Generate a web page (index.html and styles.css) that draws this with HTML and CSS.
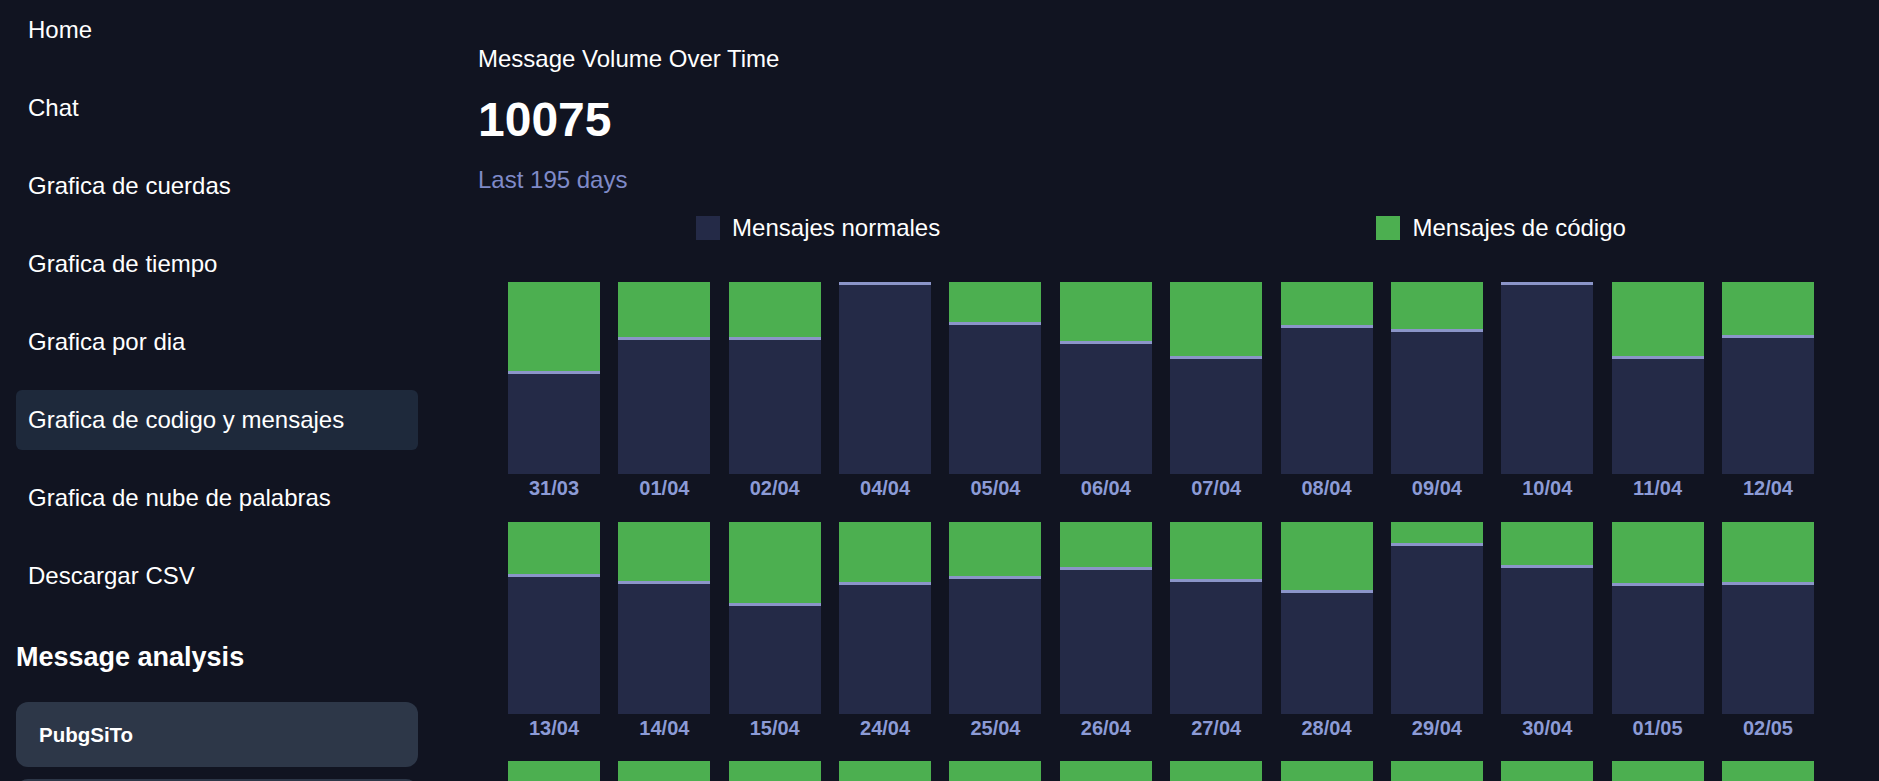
FILE: index.html
```html
<!DOCTYPE html>
<html lang="es">
<head>
<meta charset="utf-8">
<title>Message Volume Over Time</title>
<link rel="stylesheet" href="styles.css">
</head>
<body>
<div class="app">
  <aside class="sidebar">
    <nav class="nav">
      <a class="nav-item">Home</a>
      <a class="nav-item">Chat</a>
      <a class="nav-item">Grafica de cuerdas</a>
      <a class="nav-item">Grafica de tiempo</a>
      <a class="nav-item">Grafica por dia</a>
      <a class="nav-item active">Grafica de codigo y mensajes</a>
      <a class="nav-item">Grafica de nube de palabras</a>
      <a class="nav-item">Descargar CSV</a>
    </nav>
    <h2 class="section-title">Message analysis</h2>
    <div class="cards">
      <div class="user-card">PubgSiTo</div>
      <div class="user-card"></div>
    </div>
  </aside>
  <main class="main">
    <div class="chart-title">Message Volume Over Time</div>
    <div class="chart-total">10075</div>
    <div class="chart-sub">Last 195 days</div>
    <div class="legend">
      <div class="legend-item"><span class="swatch swatch-normal"></span>Mensajes normales</div>
      <div class="legend-item"><span class="swatch swatch-code"></span>Mensajes de código</div>
    </div>
    <div class="chart">
      <div class="col"><div class="bar"><div class="code" style="height:46.35%"></div><div class="normal"></div></div><div class="label">31/03</div></div>
      <div class="col"><div class="bar"><div class="code" style="height:28.65%"></div><div class="normal"></div></div><div class="label">01/04</div></div>
      <div class="col"><div class="bar"><div class="code" style="height:28.65%"></div><div class="normal"></div></div><div class="label">02/04</div></div>
      <div class="col"><div class="bar"><div class="code" style="height:0%"></div><div class="normal"></div></div><div class="label">04/04</div></div>
      <div class="col"><div class="bar"><div class="code" style="height:20.83%"></div><div class="normal"></div></div><div class="label">05/04</div></div>
      <div class="col"><div class="bar"><div class="code" style="height:30.73%"></div><div class="normal"></div></div><div class="label">06/04</div></div>
      <div class="col"><div class="bar"><div class="code" style="height:38.54%"></div><div class="normal"></div></div><div class="label">07/04</div></div>
      <div class="col"><div class="bar"><div class="code" style="height:22.40%"></div><div class="normal"></div></div><div class="label">08/04</div></div>
      <div class="col"><div class="bar"><div class="code" style="height:24.48%"></div><div class="normal"></div></div><div class="label">09/04</div></div>
      <div class="col"><div class="bar"><div class="code" style="height:0%"></div><div class="normal"></div></div><div class="label">10/04</div></div>
      <div class="col"><div class="bar"><div class="code" style="height:38.54%"></div><div class="normal"></div></div><div class="label">11/04</div></div>
      <div class="col"><div class="bar"><div class="code" style="height:27.60%"></div><div class="normal"></div></div><div class="label">12/04</div></div>

      <div class="col"><div class="bar"><div class="code" style="height:27.60%"></div><div class="normal"></div></div><div class="label">13/04</div></div>
      <div class="col"><div class="bar"><div class="code" style="height:30.73%"></div><div class="normal"></div></div><div class="label">14/04</div></div>
      <div class="col"><div class="bar"><div class="code" style="height:42.19%"></div><div class="normal"></div></div><div class="label">15/04</div></div>
      <div class="col"><div class="bar"><div class="code" style="height:31.25%"></div><div class="normal"></div></div><div class="label">24/04</div></div>
      <div class="col"><div class="bar"><div class="code" style="height:28.13%"></div><div class="normal"></div></div><div class="label">25/04</div></div>
      <div class="col"><div class="bar"><div class="code" style="height:23.44%"></div><div class="normal"></div></div><div class="label">26/04</div></div>
      <div class="col"><div class="bar"><div class="code" style="height:29.69%"></div><div class="normal"></div></div><div class="label">27/04</div></div>
      <div class="col"><div class="bar"><div class="code" style="height:35.42%"></div><div class="normal"></div></div><div class="label">28/04</div></div>
      <div class="col"><div class="bar"><div class="code" style="height:10.94%"></div><div class="normal"></div></div><div class="label">29/04</div></div>
      <div class="col"><div class="bar"><div class="code" style="height:22.40%"></div><div class="normal"></div></div><div class="label">30/04</div></div>
      <div class="col"><div class="bar"><div class="code" style="height:32.29%"></div><div class="normal"></div></div><div class="label">01/05</div></div>
      <div class="col"><div class="bar"><div class="code" style="height:31.77%"></div><div class="normal"></div></div><div class="label">02/05</div></div>

      <div class="col"><div class="bar"><div class="code" style="height:30%"></div><div class="normal"></div></div></div>
      <div class="col"><div class="bar"><div class="code" style="height:25%"></div><div class="normal"></div></div></div>
      <div class="col"><div class="bar"><div class="code" style="height:40%"></div><div class="normal"></div></div></div>
      <div class="col"><div class="bar"><div class="code" style="height:22%"></div><div class="normal"></div></div></div>
      <div class="col"><div class="bar"><div class="code" style="height:35%"></div><div class="normal"></div></div></div>
      <div class="col"><div class="bar"><div class="code" style="height:28%"></div><div class="normal"></div></div></div>
      <div class="col"><div class="bar"><div class="code" style="height:45%"></div><div class="normal"></div></div></div>
      <div class="col"><div class="bar"><div class="code" style="height:26%"></div><div class="normal"></div></div></div>
      <div class="col"><div class="bar"><div class="code" style="height:33%"></div><div class="normal"></div></div></div>
      <div class="col"><div class="bar"><div class="code" style="height:20%"></div><div class="normal"></div></div></div>
      <div class="col"><div class="bar"><div class="code" style="height:38%"></div><div class="normal"></div></div></div>
      <div class="col"><div class="bar"><div class="code" style="height:29%"></div><div class="normal"></div></div></div>
    </div>
  </main>
</div>
</body>
</html>
```
FILE: styles.css
```css
* { box-sizing: border-box; }

html, body {
  margin: 0;
  padding: 0;
  height: 100%;
  overflow: hidden;
  background: #111421;
  color: #ffffff;
  font-family: "Liberation Sans", Arial, sans-serif;
}

.app {
  display: flex;
  height: 100vh;
  overflow: hidden;
}

.sidebar {
  flex: 0 0 434px;
  width: 434px;
  padding: 0 16px;
}

.nav {
  display: flex;
  flex-direction: column;
  gap: 18px;
}

.nav-item {
  display: block;
  height: 60px;
  line-height: 60px;
  padding: 0 12px;
  font-size: 24px;
  color: #ffffff;
  border-radius: 6px;
  white-space: nowrap;
}

.nav-item.active {
  background: #1e293b;
}

.section-title {
  margin: 35px 0 0;
  font-size: 27px;
  line-height: 32px;
  font-weight: 700;
}

.cards {
  display: flex;
  flex-direction: column;
  gap: 12px;
  margin-top: 29px;
}

.user-card {
  height: 65px;
  flex: 0 0 65px;
  display: flex;
  align-items: center;
  padding: 0 23px;
  background: #2d3748;
  border-radius: 12px;
  font-size: 20.5px;
  font-weight: 700;
}

.main {
  flex: 1;
  padding: 45px 35px 0 44px;
  min-width: 0;
}

.chart-title {
  font-size: 24px;
  line-height: 28px;
}

.chart-total {
  margin-top: 19px;
  font-size: 48px;
  line-height: 56px;
  font-weight: 700;
}

.chart-sub {
  margin-top: 18px;
  font-size: 24px;
  line-height: 28px;
  color: #7f8ac8;
}

.legend {
  display: flex;
  justify-content: space-around;
  margin-top: 20px;
}

.legend-item {
  display: flex;
  align-items: center;
  gap: 12px;
  font-size: 24px;
  line-height: 28px;
}

.swatch {
  display: block;
  width: 24px;
  height: 24px;
}

.swatch-normal { background: #242a47; }
.swatch-code { background: #4caf50; }

.chart {
  display: grid;
  grid-template-columns: repeat(12, 92px);
  column-gap: 18.36px;
  row-gap: 19.5px;
  margin-top: 40px;
  padding-left: 30px;
}

.col {
  display: flex;
  flex-direction: column;
}

.bar {
  height: 192px;
  display: flex;
  flex-direction: column;
}

.code {
  background: #4caf50;
  flex: 0 0 auto;
}

.normal {
  flex: 1;
  background: #242a47;
  border-top: 3px solid #8b95c9;
}

.label {
  height: 28px;
  padding-top: 1px;
  line-height: 26px;
  text-align: center;
  font-size: 20px;
  font-weight: 700;
  color: #8c9bd6;
}
```
